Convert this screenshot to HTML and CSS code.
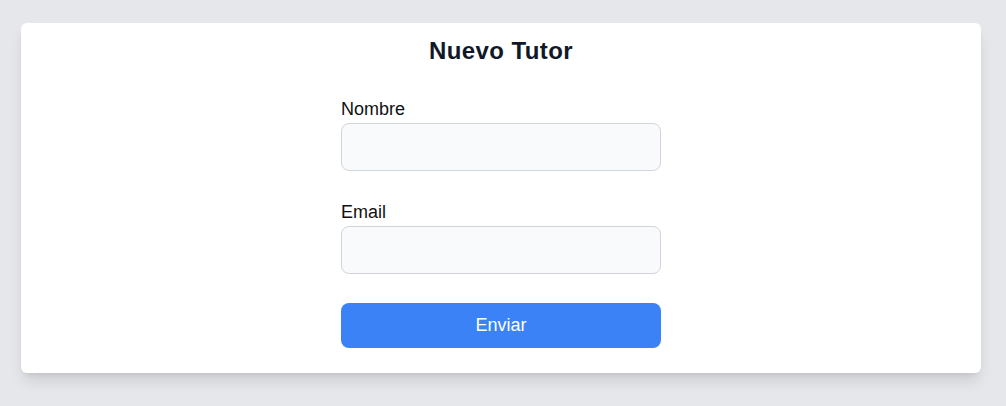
FILE: index.html
```html
<!DOCTYPE html>
<html lang="es">
<head>
<meta charset="utf-8">
<title>Nuevo Tutor</title>
<link rel="stylesheet" href="styles.css">
</head>
<body>
<div class="card">
  <h2 class="title">Nuevo Tutor</h2>
  <form class="form">
    <div class="field">
      <label class="label" for="nombre">Nombre</label>
      <input class="input" id="nombre" type="text">
    </div>
    <div class="field">
      <label class="label" for="email">Email</label>
      <input class="input" id="email" type="email">
    </div>
    <button class="button" type="button">Enviar</button>
  </form>
</div>
</body>
</html>
```
FILE: styles.css
```css
html, body {
  margin: 0;
  padding: 0;
}
body {
  background: #e5e7eb;
  font-family: "Liberation Sans", Arial, sans-serif;
  padding: 23px 25px 0 21px;
  height: 406px;
  box-sizing: border-box;
}
.card {
  background: #ffffff;
  border-radius: 6px;
  box-shadow: 0 10px 15px -3px rgba(0,0,0,0.12), 0 4px 6px -4px rgba(0,0,0,0.1);
  padding: 12px 24px 25px;
  height: 350px;
  box-sizing: border-box;
}
.title {
  margin: 0;
  text-align: center;
  font-size: 24px;
  line-height: 32px;
  font-weight: 700;
  color: #111827;
  letter-spacing: 0.4px;
}
.form {
  width: 320px;
  margin: 30px auto 0;
  display: flex;
  flex-direction: column;
}
.field {
  display: flex;
  flex-direction: column;
  margin-bottom: 29px;
}
.label {
  font-size: 18px;
  line-height: 24px;
  color: #111111;
  margin-bottom: 2px;
}
.input {
  height: 48px;
  box-sizing: border-box;
  border: 1px solid #d1d5db;
  border-radius: 8px;
  background: #f9fafb;
  padding: 0 12px;
  font-family: inherit;
  font-size: 16px;
}
.button {
  height: 45px;
  border: none;
  border-radius: 8px;
  background: #3b82f6;
  color: #ffffff;
  font-family: inherit;
  font-size: 18px;
  margin-top: 0;
}
```
